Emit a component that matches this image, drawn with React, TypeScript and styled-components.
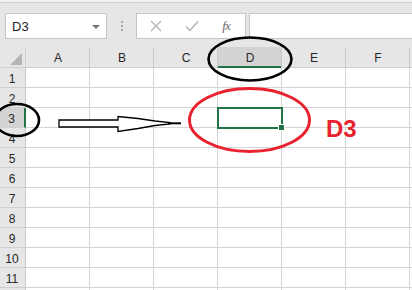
import React from 'react'
import styled, { createGlobalStyle } from 'styled-components'

const GlobalStyle = createGlobalStyle`
  html, body {
    margin: 0;
    padding: 0;
    background: #fff;
  }
  body {
    font-family: "Liberation Sans", Arial, sans-serif;
  }
`

// the last column / row are only a sliver at the window edge, so no label
const COLS = ['A', 'B', 'C', 'D', 'E', 'F', '']
const ROWS = [1, 2, 3, 4, 5, 6, 7, 8, 9, 10, 11, 0]
const ACTIVE_COL = 'D'
const ACTIVE_ROW = 3

const Page = styled.div`
  position: relative;
  width: 412px;
  height: 290px;
  overflow: hidden;
  background: #fff;
`

const Toolbar = styled.div`
  display: flex;
  align-items: flex-start;
  height: 47px;
  padding: 11px 0 0 5px;
  box-sizing: border-box;
  background: #e6e6e6;
  border-top: 2px solid #f2f2f2;
  box-shadow: inset 0 1px 0 #d2d2d2;
`

const NameBox = styled.div`
  display: flex;
  align-items: center;
  justify-content: space-between;
  width: 102px;
  height: 26px;
  box-sizing: border-box;
  padding: 0 6px 0 6px;
  background: #fff;
  border: 1px solid #c6c6c6;
  font-size: 13px;
  color: #222;
`

const DropArrow = styled.span`
  width: 0;
  height: 0;
  border-left: 4px solid transparent;
  border-right: 4px solid transparent;
  border-top: 4px solid #777;
  margin-top: 1px;
`

const Grip = styled.div`
  display: flex;
  flex-direction: column;
  gap: 2px;
  margin: 8px 13px 0 14px;
  span {
    width: 2px;
    height: 2px;
    background: #a5a5a5;
  }
`

const ButtonBox = styled.div`
  display: flex;
  align-items: center;
  width: 110px;
  height: 26px;
  box-sizing: border-box;
  background: #fff;
  border: 1px solid #c6c6c6;
`

const ToolButton = styled.div<{ $w: number }>`
  display: flex;
  align-items: center;
  justify-content: center;
  width: ${(p) => p.$w}px;
  height: 100%;
`

const Fx = styled.span`
  font-family: "Liberation Serif", "Times New Roman", serif;
  font-style: italic;
  font-size: 13px;
  color: #6a6a6a;
  letter-spacing: -1px;
`

const FormulaInput = styled.div`
  flex: 1;
  height: 26px;
  margin-left: 3px;
  box-sizing: border-box;
  background: #fff;
  border: 1px solid #c6c6c6;
  border-right: none;
`

const Sheet = styled.div`
  display: grid;
  grid-template-columns: 26px repeat(7, 64px);
  grid-auto-rows: 20px;
  grid-template-rows: 21px;
`

const Corner = styled.div`
  position: relative;
  background: #e6e6e6;
  border-right: 1px solid #cfcfcf;
  border-bottom: 1px solid #cfcfcf;
  &::after {
    content: '';
    position: absolute;
    right: 3px;
    bottom: 2px;
    width: 0;
    height: 0;
    border-left: 12px solid transparent;
    border-bottom: 12px solid #b5b5b5;
  }
`

const ColHead = styled.div<{ $active?: boolean }>`
  position: relative;
  display: flex;
  align-items: center;
  justify-content: center;
  padding-top: 2px;
  box-sizing: border-box;
  font-size: 12px;
  color: #262626;
  background: ${(p) => (p.$active ? '#d3d3d3' : '#e6e6e6')};
  border-bottom: ${(p) => (p.$active ? '2px solid #217346' : '1px solid #cfcfcf')};
  &::after {
    content: '';
    position: absolute;
    top: 2px;
    right: 0;
    bottom: ${(p) => (p.$active ? '-2px' : '-1px')};
    width: 1px;
    background: #c8c8c8;
  }
`

const RowHead = styled.div<{ $active?: boolean }>`
  display: flex;
  align-items: center;
  justify-content: center;
  box-sizing: border-box;
  padding: 2px 1px 0 0;
  font-size: 12px;
  color: #262626;
  background: ${(p) => (p.$active ? '#d3d3d3' : '#e6e6e6')};
  border-right: ${(p) => (p.$active ? '2px solid #217346' : '1px solid #c8c8c8')};
  border-bottom: 1px solid #cfcfcf;
`

const Cell = styled.div<{ $active?: boolean }>`
  position: relative;
  box-sizing: border-box;
  border-right: 1px solid #d4d4d4;
  border-bottom: 1px solid #d4d4d4;
  ${(p) =>
    p.$active &&
    `
    &::before {
      content: '';
      position: absolute;
      left: -1px;
      top: -1px;
      right: -2px;
      bottom: -2px;
      border: 2px solid #217346;
      z-index: 1;
    }
    &::after {
      content: '';
      position: absolute;
      right: -3px;
      bottom: -3px;
      width: 5px;
      height: 5px;
      background: #217346;
      box-shadow: 0 0 0 1px #fff;
      z-index: 2;
    }
  `}
`

const Marks = styled.svg`
  position: absolute;
  left: 0;
  top: 0;
  pointer-events: none;
  z-index: 3;
`

const Label = styled.div`
  position: absolute;
  left: 326px;
  top: 115px;
  font-family: "Liberation Sans", Arial, sans-serif;
  font-weight: bold;
  font-size: 24px;
  line-height: 28px;
  color: #e8232f;
  z-index: 3;
`

function Annotations() {
  return (
    <>
      <Marks width={412} height={290} viewBox="0 0 412 290">
        <ellipse cx={250} cy={59} rx={41.5} ry={21.5} fill="none" stroke="#000" strokeWidth={2.6} />
        <ellipse cx={17} cy={120} rx={22} ry={16} fill="none" stroke="#000" strokeWidth={2.6} />
        <ellipse cx={249.5} cy={120} rx={60} ry={31.5} fill="none" stroke="#e8232f" strokeWidth={3} />
        <polygon
          points="59,120 118,120 118,116.5 138,118.5 155,121 170,122.5 170,124 155,125.5 138,128.5 118,131.5 118,127 59,127"
          fill="#fff"
          stroke="#000"
          strokeWidth={1.3}
          strokeLinejoin="miter"
        />
        <line x1={168} y1={123.3} x2={181} y2={123.3} stroke="#000" strokeWidth={2} />
      </Marks>
      <Label>D3</Label>
    </>
  )
}

export default function App() {
  return (
    <Page>
      <GlobalStyle />
      <Toolbar>
        <NameBox>
          <span>D3</span>
          <DropArrow />
        </NameBox>
        <Grip>
          <span />
          <span />
          <span />
        </Grip>
        <ButtonBox>
          <ToolButton $w={38}>
            <svg width="12" height="12" viewBox="0 0 12 12">
              <path d="M1 1 L11 11 M11 1 L1 11" stroke="#b3b3b3" strokeWidth="1.3" fill="none" />
            </svg>
          </ToolButton>
          <ToolButton $w={34}>
            <svg width="14" height="12" viewBox="0 0 14 12">
              <path d="M1 6.5 L5 10.5 L13 1.5" stroke="#b3b3b3" strokeWidth="1.5" fill="none" />
            </svg>
          </ToolButton>
          <ToolButton $w={34}>
            <Fx>fx</Fx>
          </ToolButton>
        </ButtonBox>
        <FormulaInput />
      </Toolbar>
      <Sheet>
        <Corner />
        {COLS.map((c, i) => (
          <ColHead key={'h' + i} $active={c === ACTIVE_COL}>
            {c}
          </ColHead>
        ))}
        {ROWS.map((r, ri) => (
          <React.Fragment key={'r' + ri}>
            <RowHead $active={r === ACTIVE_ROW}>{r || ''}</RowHead>
            {COLS.map((c, ci) => (
              <Cell key={ri + '-' + ci} $active={r === ACTIVE_ROW && c === ACTIVE_COL} />
            ))}
          </React.Fragment>
        ))}
      </Sheet>
      <Annotations />
    </Page>
  )
}
